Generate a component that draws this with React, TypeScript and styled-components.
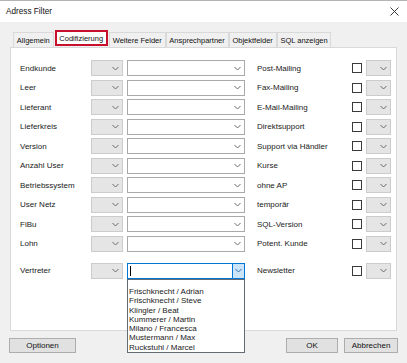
import styled, { createGlobalStyle } from 'styled-components'

const GlobalStyle = createGlobalStyle`
  html, body {
    margin: 0;
    padding: 0;
  }
  body {
    background: #f0f0f0;
    font-family: 'Liberation Sans', Arial, sans-serif;
    font-size: 8px;
    color: #000;
  }
`

const leftRows = ['Endkunde', 'Leer', 'Lieferant', 'Lieferkreis', 'Version', 'Anzahl User', 'Betriebssystem', 'User Netz', 'FiBu', 'Lohn']
const rightRows = ['Post-Mailing', 'Fax-Mailing', 'E-Mail-Mailing', 'Direktsupport', 'Support via Händler', 'Kurse', 'ohne AP', 'temporär', 'SQL-Version', 'Potent. Kunde']
const tabs = ['Allgemein', 'Codifizierung', 'Weitere Felder', 'Ansprechpartner', 'Objektfelder', 'SQL anzeigen']
const vertreter = ['', 'Frischknecht / Adrian', 'Frischknecht / Steve', 'Klingler / Beat', 'Kummerer / Martin', 'Milano / Francesca', 'Mustermann / Max', 'Ruckstuhl / Marcel']

function Chevron({ color = '#6b6b6b' }: { color?: string }) {
  return (
    <svg width="7" height="5" viewBox="0 0 7 5">
      <path d="M0.5 1 L3.5 4 L6.5 1" fill="none" stroke={color} strokeWidth="1" />
    </svg>
  )
}

function App() {
  return (
    <>
      <GlobalStyle />
      <Window>
        <TitleBar>
          <span>Adress Filter</span>
          <svg width="9" height="9" viewBox="0 0 9 9">
            <path d="M0.5 0.5 L8.5 8.5 M8.5 0.5 L0.5 8.5" stroke="#222" strokeWidth="0.9" />
          </svg>
        </TitleBar>
        <Body>
          <TabStrip>
            {tabs.map((t) => (
              <Tab key={t} $active={t === 'Codifizierung'}>{t}</Tab>
            ))}
          </TabStrip>
          <Panel>
            <Rows>
              {leftRows.map((label, i) => (
                <Row key={label}>
                  <Label>{label}</Label>
                  <SmallCombo $w={32}><Chevron /></SmallCombo>
                  <BigCombo><Chevron /></BigCombo>
                  <RightLabel>{rightRows[i]}</RightLabel>
                  <Check />
                  <SmallCombo $w={25}><Chevron /></SmallCombo>
                </Row>
              ))}
              <Row $spaced>
                <Label>Vertreter</Label>
                <SmallCombo $w={32}><Chevron /></SmallCombo>
                <BigCombo $focused>
                  <Caret />
                  <DropButton><Chevron color="#2a6fb5" /></DropButton>
                  <DropList>
                    {vertreter.map((v, i) => (
                      <DropItem key={i}>{v}</DropItem>
                    ))}
                  </DropList>
                </BigCombo>
                <RightLabel>Newsletter</RightLabel>
                <Check />
                <SmallCombo $w={25}><Chevron /></SmallCombo>
              </Row>
            </Rows>
          </Panel>
          <Footer>
            <Button $w={67}>Optionen</Button>
            <FooterRight>
              <Button $w={52}>OK</Button>
              <Button $w={54}>Abbrechen</Button>
            </FooterRight>
          </Footer>
        </Body>
      </Window>
    </>
  )
}

export default App

const Window = styled.div`
  width: 407px;
  height: 363px;
  box-sizing: border-box;
  border-top: 1px solid #b4b4b4;
  background: #f0f0f0;
  display: flex;
  flex-direction: column;
  overflow: hidden;
`

const TitleBar = styled.div`
  height: 21px;
  background: #fff;
  display: flex;
  align-items: center;
  justify-content: space-between;
  padding: 0 8px 0 6px;
  font-size: 8.2px;
  color: #111;
`

const Body = styled.div`
  flex: 1;
  display: flex;
  flex-direction: column;
  padding: 8px 10px 0 10px;
`

const TabStrip = styled.div`
  display: flex;
  align-items: flex-end;
  height: 17px;
  padding-left: 3px;
`

const Tab = styled.div<{ $active?: boolean }>`
  box-sizing: border-box;
  height: ${(p) => (p.$active ? '16px' : '15px')};
  margin-bottom: ${(p) => (p.$active ? '1px' : '0')};
  padding: 0 2.8px;
  display: flex;
  align-items: center;
  font-size: 7.5px;
  color: #111;
  background: ${(p) => (p.$active ? '#fff' : '#f0f0f0')};
  border: ${(p) => (p.$active ? '2px solid #c8102e' : '1px solid #d9d9d9')};
  border-bottom: ${(p) => (p.$active ? '2px solid #c8102e' : 'none')};
  margin-right: ${(p) => (p.$active ? '1px' : '0')};
  margin-left: ${(p) => (p.$active ? '1px' : '0')};
`

const Panel = styled.div`
  box-sizing: border-box;
  height: 284px;
  background: #fff;
  border: 1px solid #d9d9d9;
  padding: 12px 0 0 9px;
`

const Rows = styled.div`
  display: flex;
  flex-direction: column;
  gap: 3.55px;
`

const Row = styled.div<{ $spaced?: boolean }>`
  display: flex;
  align-items: center;
  height: 16px;
  margin-top: ${(p) => (p.$spaced ? '7.5px' : '0')};
`

const Label = styled.div`
  width: 71px;
  color: #1a1a1a;
`

const SmallCombo = styled.div<{ $w: number }>`
  box-sizing: border-box;
  width: ${(p) => p.$w}px;
  height: 16px;
  background: #e5e5e5;
  border: 1px solid #cccccc;
  display: flex;
  align-items: center;
  justify-content: flex-end;
  padding-right: 3px;
`

const BigCombo = styled.div<{ $focused?: boolean }>`
  position: relative;
  box-sizing: border-box;
  width: 118px;
  height: 16px;
  margin-left: 4px;
  background: #fff;
  border: 1px solid ${(p) => (p.$focused ? '#0078d7' : '#a9a9a9')};
  display: flex;
  align-items: center;
  justify-content: flex-end;
  padding-right: ${(p) => (p.$focused ? '0' : '3px')};
`

const Caret = styled.div`
  position: absolute;
  left: 2px;
  top: 2px;
  width: 1px;
  height: 10px;
  background: #000;
`

const DropButton = styled.div`
  box-sizing: border-box;
  width: 12px;
  height: 100%;
  background: #cce4f7;
  border-left: 1px solid #0078d7;
  display: flex;
  align-items: center;
  justify-content: center;
`

const DropList = styled.div`
  position: absolute;
  left: -1px;
  top: calc(100% + 1px);
  width: 118px;
  height: 74px;
  box-sizing: border-box;
  background: #fff;
  border: 1px solid #646b75;
  display: flex;
  flex-direction: column;
  padding-left: 1px;
  z-index: 2;
`

const DropItem = styled.div`
  height: 9.25px;
  line-height: 9.25px;
  white-space: nowrap;
  color: #1a1a1a;
`

const RightLabel = styled.div`
  width: 95px;
  margin-left: 12px;
  color: #1a1a1a;
`

const Check = styled.div`
  box-sizing: border-box;
  width: 10px;
  height: 10px;
  border: 1px solid #3a3a3a;
  background: #fff;
  margin-right: 4px;
`

const Footer = styled.div`
  display: flex;
  justify-content: space-between;
  margin: 7px -1px 0 -1px;
`

const FooterRight = styled.div`
  display: flex;
  gap: 6px;
`

const Button = styled.div<{ $w: number }>`
  box-sizing: border-box;
  width: ${(p) => p.$w}px;
  height: 15px;
  background: #e1e1e1;
  border: 1px solid #adadad;
  display: flex;
  align-items: center;
  justify-content: center;
  color: #111;
`
